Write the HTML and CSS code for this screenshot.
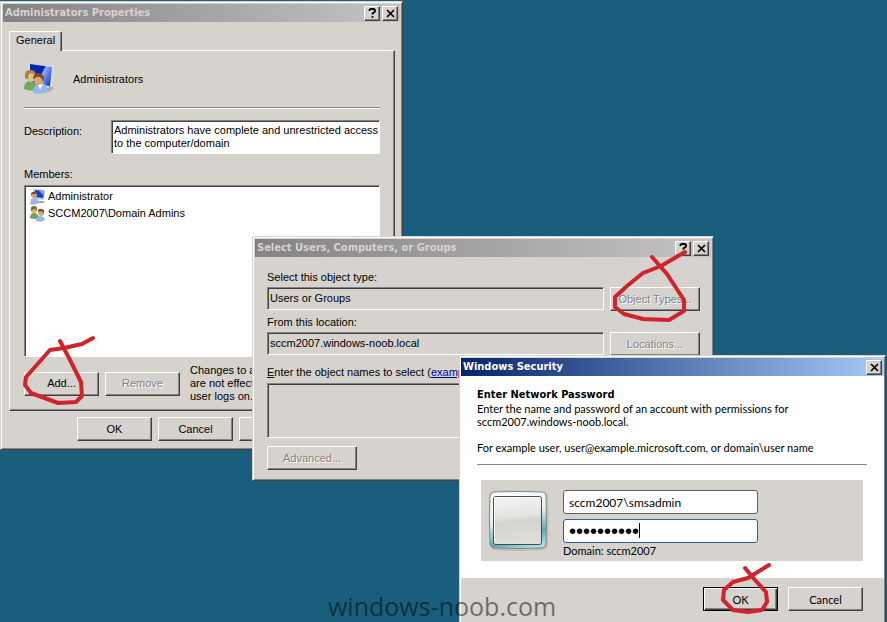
FILE: index.html
```
<!DOCTYPE html>
<html lang="en">
<head>
<meta charset="utf-8">
<meta name="viewport" content="width=device-width, initial-scale=1">
<title>Administrators Properties</title>
<link rel="stylesheet" href="styles.css">
</head>
<body>
<main class="desktop">

  <section class="window properties" aria-label="Administrators Properties">
    <header class="titlebar">
      <h1 class="title">Administrators Properties</h1>
      <button class="caption" type="button" aria-label="Help"><svg width="9" height="10" viewBox="0 0 9 10"><path d="M1.5 3V1.8L2.6 1h3.2L7 2v1.6L4.5 5.4v1.2M4.5 8v1.7" fill="none" stroke="#000" stroke-width="1.8"/></svg></button>
      <button class="caption" type="button" aria-label="Close"><svg width="9" height="9" viewBox="0 0 9 9"><path d="M1 1l7 7M8 1L1 8" fill="none" stroke="#000" stroke-width="1.7"/></svg></button>
    </header>
    <div class="properties-body">
      <div class="tabs"><button class="tab" type="button">General</button></div>
      <div class="tab-panel">
        <div class="group-head">
          <svg width="32" height="32" viewBox="0 0 32 32">
            <defs>
              <linearGradient id="screen" x1="0" y1=".2" x2="1" y2=".7"><stop offset="0" stop-color="#0a2ba8"/><stop offset=".5" stop-color="#0c20b4"/><stop offset=".55" stop-color="#8fb0f4"/><stop offset="1" stop-color="#1f45d0"/></linearGradient>
            </defs>
            <path d="M4 0l26 3-2 22-6 2-18-3z" fill="#d9dfe9"/>
            <path d="M6 1l22 3-2 19-20-2z" fill="url(#screen)"/>
            <path d="M26 23l4 2-5 4-6-1z" fill="#a9adb6"/>
            <path d="M0 26q0-7 5-8l6 1 3 7q-6 3-14 0z" fill="#71a95b"/>
            <circle cx="7" cy="14" r="5" fill="#e0c08c"/>
            <path d="M1 14q-1-7 5-7 6-1 6 6-3-4-7-2l-1 5q-3 0-3-2z" fill="#a8863e"/>
            <path d="M9 30q0-9 6-10h4q4 2 5 9-7 3-15 1z" fill="#92b9e8"/>
            <path d="M14 21l2 6 3-6z" fill="#fff"/>
            <circle cx="15" cy="17" r="5" fill="#d9a577"/>
            <path d="M9 16q0-6 6-6 5 1 5 6l-1 3q-1-4-3-5-4-1-6 2z" fill="#794a27"/>
          </svg>
          <span>Administrators</span>
        </div>
        <hr class="rule">
        <div class="description">
          <label for="desc">Description:</label>
          <textarea id="desc" class="field" rows="2">Administrators have complete and unrestricted access
to the computer/domain</textarea>
        </div>
        <p class="members-label" id="members">Members:</p>
        <ul class="members" aria-labelledby="members">
          <li><svg width="16" height="16" viewBox="0 0 16 16"><path d="M3 0l12 1-1 10-9-1z" fill="#b9c9e4"/><path d="M5 1l9 1-1 7-8-1z" fill="#173cc5"/><path d="M9 2l5 0-1 4z" fill="#7fa6f2"/><path d="M8 12h6v2H8z" fill="#a3a7ae"/><path d="M0 15q0-6 4-6t5 5q-4 3-9 1z" fill="#98bce3"/><circle cx="4" cy="6" r="3" fill="#d5a173"/><path d="M1 6q0-4 4-3l2 2-4 0z" fill="#72502f"/></svg>Administrator</li>
          <li><svg width="16" height="16" viewBox="0 0 16 16"><path d="M0 12q0-5 4-5t5 5q-4 2-9 0z" fill="#6fa45a"/><circle cx="4" cy="4" r="3" fill="#d9b470"/><path d="M1 5q-1-5 3-5t3 4l-3-1z" fill="#8c692d"/><path d="M6 15q0-5 4-5t5 4q-4 3-9 1z" fill="#91b8e6"/><circle cx="11" cy="7" r="3" fill="#dda678"/><path d="M8 6q0-4 3-3 4 0 3 4l-3-2z" fill="#795030"/></svg>SCCM2007\Domain Admins</li>
        </ul>
        <div class="member-actions">
          <button class="button" type="button">Add...</button>
          <button class="button" type="button" disabled>Remove</button>
          <p class="note">Changes to a user's group<br>are not effective until the next<br>user logs on.</p>
        </div>
      </div>
      <div class="dialog-actions">
        <button class="button" type="button">OK</button>
        <button class="button" type="button">Cancel</button>
        <button class="button" type="button">Apply</button>
      </div>
    </div>
  </section>

  <section class="window select" aria-label="Select Users, Computers, or Groups">
    <header class="titlebar">
      <h2 class="title">Select Users, Computers, or Groups</h2>
      <button class="caption" type="button" aria-label="Help"><svg width="9" height="10" viewBox="0 0 9 10"><path d="M1.5 3V1.8L2.6 1h3.2L7 2v1.6L4.5 5.4v1.2M4.5 8v1.7" fill="none" stroke="#000" stroke-width="1.8"/></svg></button>
      <button class="caption" type="button" aria-label="Close"><svg width="9" height="9" viewBox="0 0 9 9"><path d="M1 1l7 7M8 1L1 8" fill="none" stroke="#000" stroke-width="1.7"/></svg></button>
    </header>
    <div class="select-body">
      <label for="type">Select this object type:</label>
      <div class="row">
        <input id="type" class="field" type="text" value="Users or Groups" readonly>
        <button class="button wide" type="button" disabled>Object Types...</button>
      </div>
      <label for="location">From this location:</label>
      <div class="row">
        <input id="location" class="field" type="text" value="sccm2007.windows-noob.local" readonly>
        <button class="button wide" type="button" disabled>Locations...</button>
      </div>
      <div class="names-label"><label for="names"><u>E</u>nter the object names to select</label> (<a href="#names">examples</a>):</div>
      <div class="row">
        <textarea id="names" class="field names" readonly></textarea>
        <button class="button wide" type="button" disabled>Check Names</button>
      </div>
      <button class="button wide advanced" type="button" disabled>Advanced...</button>
    </div>
  </section>

  <section class="window security" aria-label="Windows Security">
    <header class="titlebar active">
      <h2 class="title">Windows Security</h2>
      <button class="caption" type="button" aria-label="Close"><svg width="9" height="9" viewBox="0 0 9 9"><path d="M1 1l7 7M8 1L1 8" fill="none" stroke="#000" stroke-width="1.7"/></svg></button>
    </header>
    <div class="security-body">
      <h3>Enter Network Password</h3>
      <p>Enter the name and password of an account with permissions for<br>sccm2007.windows-noob.local.</p>
      <p class="example">For example user, user@example.microsoft.com, or domain\user name</p>
      <hr class="line">
      <div class="credentials">
        <svg width="62" height="62" viewBox="0 0 62 62">
          <defs>
            <linearGradient id="frame" x1=".3" y1="0" x2=".6" y2="1"><stop offset="0" stop-color="#fff"/><stop offset=".45" stop-color="#e8eeee"/><stop offset=".8" stop-color="#58a9bd"/><stop offset="1" stop-color="#a5dbe5"/></linearGradient>
            <linearGradient id="glass" x1="0" y1="0" x2=".1" y2="1"><stop offset="0" stop-color="#f5f5f4"/><stop offset=".45" stop-color="#e4e3e1"/><stop offset=".55" stop-color="#d5d3cf"/><stop offset="1" stop-color="#dfddd9"/></linearGradient>
          </defs>
          <path d="M5 1q25-2 51 1 4 1 4 5 1 24 0 47 0 5-5 6-24 2-48 0-5 0-5-6-2-24-1-47 0-5 4-6z" fill="#9c9a96" opacity=".4"/>
          <path d="M6 2q24-1 48 0 4 0 4 4 1 24 0 47 0 5-4 5-24 1-47 0-4 0-5-4-1-24 0-47 0-4 4-5z" fill="url(#frame)" stroke="#858b8b"/>
          <rect x="5.500" y="6.500" width="48" height="48" rx="2" fill="url(#glass)" stroke="#484b4c"/>
          <path d="M6.500 53V7.500H52" fill="none" stroke="#fff"/>
        </svg>
        <div class="inputs">
          <input type="text" aria-label="User name" value="sccm2007\smsadmin">
          <div class="password"><input type="password" aria-label="Password" value="password12"><span class="caret"></span></div>
          <p>Domain: sccm2007</p>
        </div>
      </div>
    </div>
    <footer class="security-actions">
      <button class="button default" type="button">OK</button>
      <button class="button" type="button">Cancel</button>
    </footer>
  </section>

  <svg class="marks" width="887" height="622" viewBox="0 0 887 622" aria-hidden="true">
    <path d="M93 338L82 344 64 348 50 350 26 377 25 385 31 393 58 403 76 402 82 396 81 382 70 360 60 341"/>
    <path d="M685 252L661 266 643 273 627 286 615 297V307L624 314 643 319 669 320 684 311V300L667 274 652 257"/>
    <path d="M769 565L748 578 733 582 724 590 723 600 733 610 748 612 762 610 767 602 766 592 755 580 745 568"/>
  </svg>
  <p class="watermark">windows-noob.com</p>
</main>
</body>
</html>
```

FILE: styles.css
```
* { box-sizing: border-box; }
body { margin: 0; background: #1a5e7e; color: #000; font: 11px/13px "Liberation Sans", Arial, sans-serif; }
h1, h2, h3, p, ul { margin: 0; padding: 0; }
svg { display: block; flex: none; }
button, input, textarea { font: inherit; color: inherit; margin: 0; }

.desktop { position: relative; height: 100vh; overflow: hidden; }
.window {
  position: absolute;
  padding: 2px;
  background: #d6d3ce;
  border: 1px solid;
  border-color: #d6d3ce #424142 #424142 #d6d3ce;
  box-shadow: inset 1px 1px #fff, inset -1px -1px #848284;
}
.properties { left: 0; top: 1px; width: 403px; }
.select { left: 252px; top: 236px; width: 462px; }
.security { left: 459px; top: 355px; width: 427px; padding: 2px 1px; }

.titlebar {
  display: flex;
  align-items: center;
  gap: 2px;
  height: 18px;
  padding: 0 2px;
  background: linear-gradient(90deg, #848284, #c6c3c6);
  color: #d6d3ce;
}
.titlebar.active { background: linear-gradient(90deg, #08246b, #a5cbf7); color: #fff; }
.title { flex: 1; font: bold 11px/16px "DejaVu Sans Condensed", "DejaVu Sans", sans-serif; white-space: nowrap; }
.caption {
  display: flex;
  align-items: center;
  justify-content: center;
  width: 16px;
  height: 15px;
  padding: 0;
  background: #d6d3ce;
  border: 1px solid;
  border-color: #fff #424142 #424142 #fff;
  box-shadow: inset -1px -1px #848284;
}

.button {
  width: 75px;
  height: 24px;
  padding: 0;
  background: #d6d3ce;
  border: 1px solid;
  border-color: #fff #424142 #424142 #fff;
  box-shadow: inset -1px -1px #848284;
}
.button:disabled { color: #848284; text-shadow: 1px 1px #fff; }
.button.wide { width: 90px; }
.button.default { border-color: #000; box-shadow: inset 1px 1px #fff, inset -1px -1px #424142, inset -2px -2px #848284; }
.field {
  display: block;
  flex: 1;
  min-width: 0;
  height: 23px;
  padding: 1px 2px 2px;
  background: #fff;
  border: 1px solid;
  border-color: #848284 #fff #fff #848284;
  border-radius: 0;
  box-shadow: inset 1px 1px #424142;
  outline: 0;
  resize: none;
  overflow: hidden;
}

.properties-body { padding: 9px 5px 6px 6px; }
.tabs { display: flex; }
.tab {
  position: relative;
  height: 20px;
  margin-bottom: -1px;
  padding: 0 6px 2px;
  background: #d6d3ce;
  border: 1px solid;
  border-color: #fff #424142 transparent #fff;
  border-bottom: 0;
  border-radius: 2px 2px 0 0;
  box-shadow: inset -1px 0 #848284;
}
.tab-panel {
  padding: 12px 14px 7px;
  border: 1px solid;
  border-color: #fff #424142 #424142 #fff;
  box-shadow: inset -1px -1px #848284;
}
.group-head { display: flex; align-items: center; gap: 17px; }
.rule { margin: 12px 0 11px; border: 0; border-top: 1px solid #848284; border-bottom: 1px solid #fff; }
.description { display: flex; align-items: flex-start; }
.description label { width: 87px; padding-top: 5px; }
.description .field { height: 34px; padding: 3px 2px; white-space: pre; }
.members-label { margin: 14px 0 4px; }
.members {
  height: 172px;
  padding: 2px 5px;
  list-style: none;
  background: #fff;
  border: 1px solid;
  border-color: #848284 #fff #fff #848284;
  box-shadow: inset 1px 1px #424142;
}
.members li { display: flex; align-items: center; gap: 2px; height: 17px; }
.member-actions { display: flex; align-items: center; gap: 6px; margin-top: 7px; }
.member-actions .button { flex: none; }
.note { padding-left: 4px; white-space: nowrap; }
.dialog-actions { display: flex; justify-content: flex-end; gap: 6px; padding: 6px 81px 0 0; }

.select-body { padding: 14px 11px 8px 12px; }
.select-body > label { display: block; margin-bottom: 3px; }
.select .field { background: #d6d3ce; }
.row { display: flex; align-items: flex-start; gap: 6px; margin-bottom: 5px; }
.names-label { margin: 10px 0 4px; }
.select .names { height: 55px; }
.advanced { display: block; margin-top: 8px; }
a { color: #0000a5; }

.security { font-family: Lato, sans-serif; font-size: 11px; }
.security-body { padding: 11px 17px 17px 16px; background: #fff; }
.security h3 { font: bold 11px/15px "DejaVu Sans Condensed", "DejaVu Sans", sans-serif; }
.example { padding-top: 13px; }
.line { margin: 10px 0 15px; border: 0; border-top: 1px solid #848284; }
.credentials { display: flex; align-items: flex-start; gap: 13px; margin: 0 4px; padding: 10px 6px 0 7px; height: 81px; background: #d6d3ce; }
.inputs { width: 195px; }
.inputs input { display: block; width: 100%; height: 24px; padding: 0 5px; font-size: 12px; background: #fff; border: 1px solid #5b6267; border-radius: 3px; outline: 0; }
.password { position: relative; margin: 5px 0 1px; }
.inputs .password input { border-color: #2c628b; font-family: "Liberation Sans", sans-serif; font-size: 20px; }
.caret { position: absolute; left: 76px; top: 4px; width: 1px; height: 15px; background: #000; }
.security-actions { display: flex; justify-content: flex-end; gap: 10px; padding: 9px 21px 16px; }

.marks { position: absolute; left: 0; top: 0; pointer-events: none; }
.marks path { fill: none; stroke: #d1232b; stroke-width: 4; stroke-linecap: round; stroke-linejoin: round; }
.watermark { position: absolute; left: 328px; top: 591px; font: 25px/30px "Open Sans", sans-serif; color: rgba(0, 0, 0, .5); white-space: nowrap; pointer-events: none; }
```
